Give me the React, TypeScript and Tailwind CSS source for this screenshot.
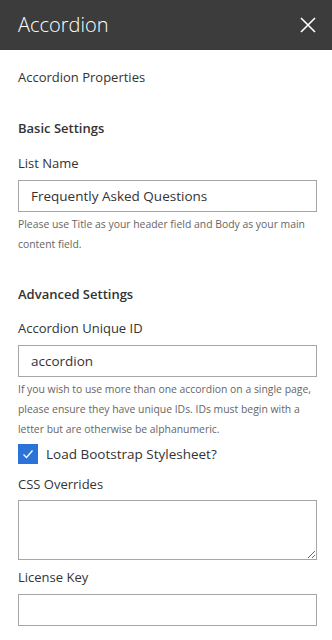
const Field = ({ label, value }: { label: string; value?: string }) => (
  <div className="flex flex-col">
    <label className="text-[13px] leading-5 text-[#333]">{label}</label>
    <div className="mt-[7px] flex h-8 items-center border border-[#a6a6a6] px-3 text-[13.5px] text-[#333]">
      {value}
    </div>
  </div>
);

const Help = ({ children }: { children: React.ReactNode }) => (
  <p className="mt-[2px] text-[10.4px] leading-[20px] text-[#666]">{children}</p>
);

const App = () => {
  return (
    <div className="w-[332px] h-[640px] overflow-hidden bg-white font-['Segoe_UI','Open_Sans',sans-serif]">
      <div className="flex h-[50px] items-center justify-between bg-[#3c3c3c] pl-[18px] pr-[16px]">
        <h1 className="text-[20px] font-light text-white">Accordion</h1>
        <svg width="16" height="16" viewBox="0 0 16 16" className="text-white">
          <path d="M1 1L15 15M15 1L1 15" stroke="currentColor" strokeWidth="1.6" />
        </svg>
      </div>

      <div className="px-[18px] pr-[15px]">
        <p className="mt-[17px] text-[13px] leading-5 text-[#333]">Accordion Properties</p>

        <h2 className="mt-[31px] text-[13px] font-semibold leading-5 text-[#333]">Basic Settings</h2>

        <div className="mt-[15px]">
          <Field label="List Name" value="Frequently Asked Questions" />
          <Help>Please use Title as your header field and Body as your main content field.</Help>
        </div>

        <h2 className="mt-[30px] text-[13px] font-semibold leading-5 text-[#333]">Advanced Settings</h2>

        <div className="mt-[14px]">
          <Field label="Accordion Unique ID" value="accordion" />
          <Help>
            If you wish to use more than one accordion on a single page, please ensure they have unique IDs. IDs must
            begin with a letter but are otherwise be alphanumeric.
          </Help>
        </div>

        <div className="mt-[5px] flex items-center gap-2">
          <span className="flex h-5 w-5 items-center justify-center bg-[#2b72d9]">
            <svg width="12" height="12" viewBox="0 0 12 12">
              <path d="M1.5 6.5L4.5 9.5L10.5 2.5" fill="none" stroke="white" strokeWidth="1.3" />
            </svg>
          </span>
          <span className="text-[13.5px] text-[#333]">Load Bootstrap Stylesheet?</span>
        </div>

        <div className="mt-[10px] flex flex-col">
          <label className="text-[13px] leading-5 text-[#333]">CSS Overrides</label>
          <textarea className="mt-[6px] h-[60px] resize-y border border-[#a6a6a6] px-3 text-[14px] outline-none" />
        </div>

        <div className="mt-[7px]">
          <Field label="License Key" />
        </div>
      </div>
    </div>
  );
};

export default App;
